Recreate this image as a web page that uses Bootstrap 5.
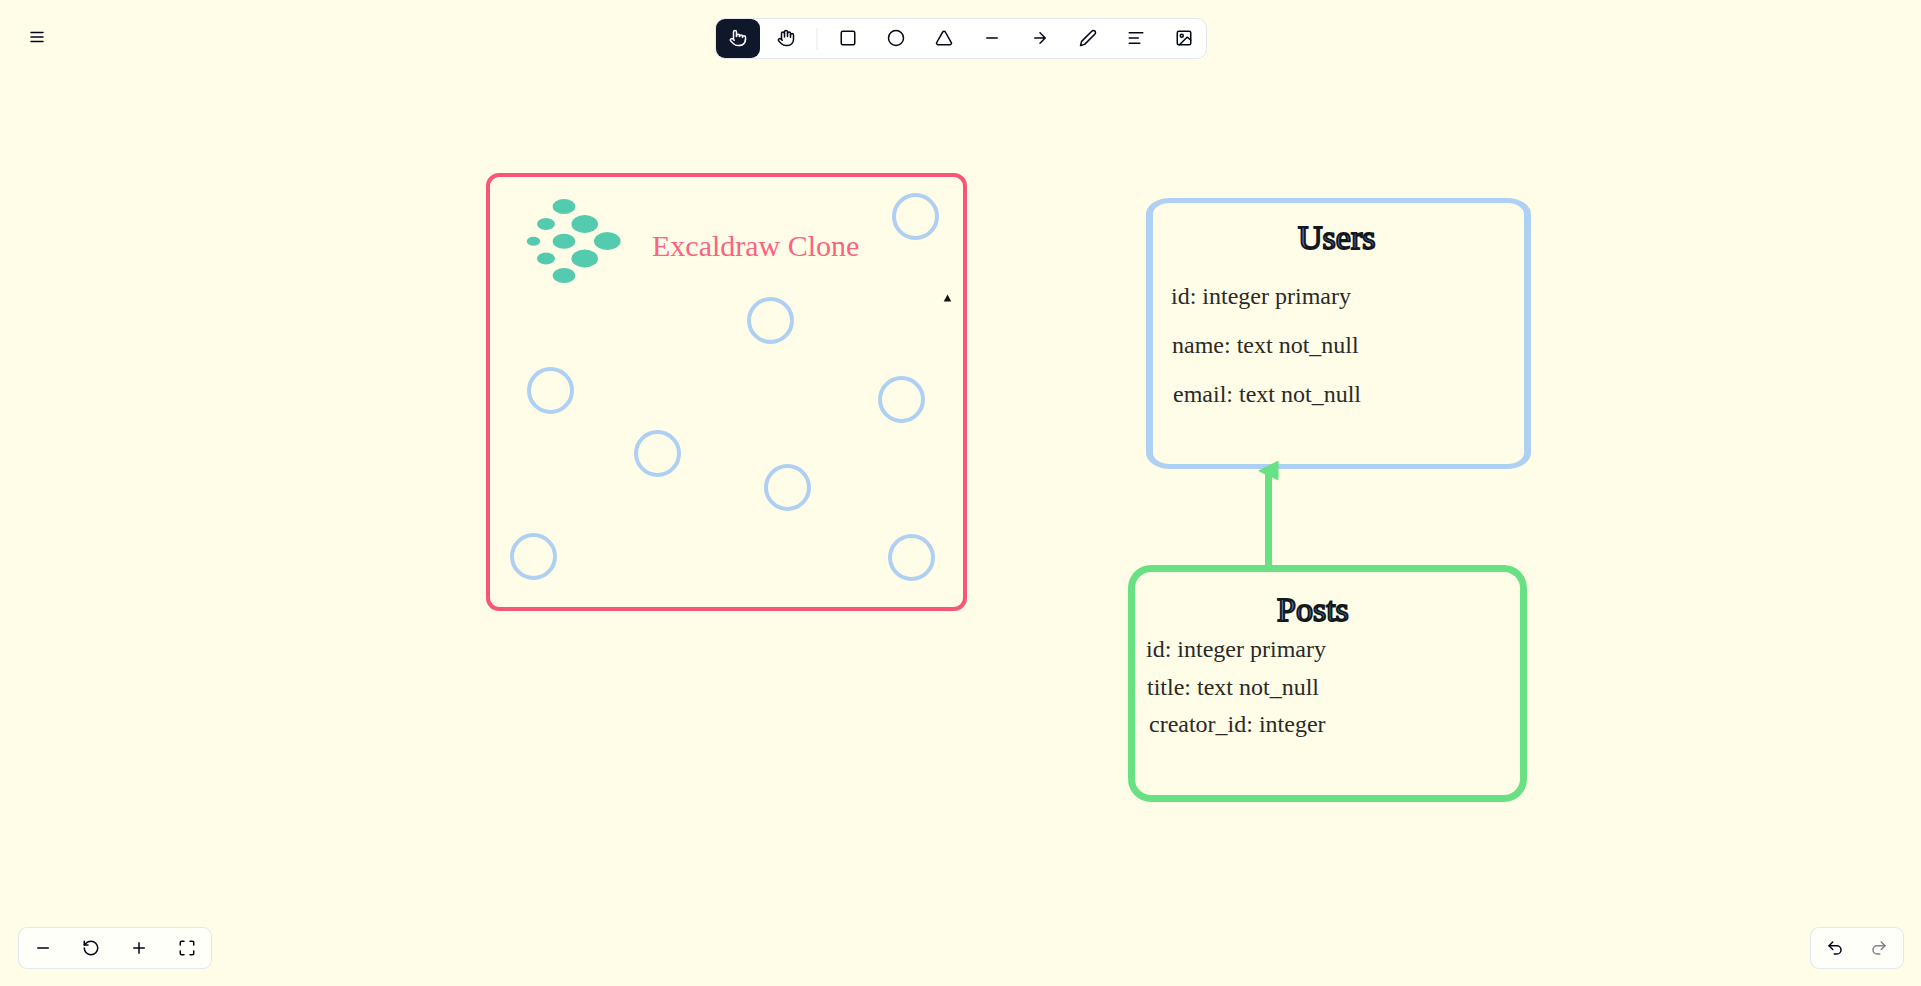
<!DOCTYPE html>
<html lang="en">
<head>
<meta charset="utf-8">
<meta name="viewport" content="width=device-width, initial-scale=1">
<title>Excaldraw Clone</title>
<link href="https://cdn.jsdelivr.net/npm/bootstrap@5.3.0/dist/css/bootstrap.min.css" rel="stylesheet">
<style>
  :root { --ink: #0f172a; --line: #e2e8f0; --paper: #fffde7; --sky: #aed0f2; --rose: #f75676; --leaf: #67e184; }
  body { background: var(--paper); font-family: Inter, sans-serif; }
  .icon { width: 18px; height: 18px; display: block; fill: none; stroke: currentColor; stroke-width: 2; stroke-linecap: round; stroke-linejoin: round; }
  .tool { --bs-btn-color: #020617; --bs-btn-hover-bg: #f1f5f9; --bs-btn-active-bg: var(--ink); --bs-btn-active-color: #f8fafc; --bs-btn-disabled-color: #020617; --bs-btn-disabled-opacity: .5;
    width: 44px; height: 39px; border-radius: 9px; border: 0; padding: 0 0 1px; }
  .tool-wide { width: 48px; }
  .tool-menu { width: 42px; height: 38px; }
  .tool-bar { background: #fff; border: 1px solid var(--line); border-radius: 10px; }
  .tool-panel { background: rgba(255, 255, 255, .8); border: 1px solid var(--line); border-radius: 9px; }
  .tool-panel .tool { height: 40px; padding: 0; }
  .tool-history { padding: 0 2px; }
  .tool-rule { width: 2px; height: 22px; background: #f1f5f9; }
  .edge { padding: 18px; }
  .edge-bottom { padding: 0 17px 17px 18px; }

  /* Canvas objects: each one sits at its own --x / --y */
  .node { position: absolute; left: calc(var(--x) * 1px); top: calc(var(--y) * 1px); }
  .frame-rose { width: 481px; height: 438px; border: 4px solid var(--rose); border-radius: 13px; }
  .frame-sky { width: 385px; height: 271px; border: solid var(--sky); border-width: 5px 7px; border-radius: 24px / 16px; }
  .frame-leaf { width: 399px; height: 237px; border: 7px solid var(--leaf); border-radius: 23px; }
  .ring { width: 47px; height: 47px; border: 4px solid var(--sky); border-radius: 50%; }
  .label { font-family: "Liberation Serif", serif; font-size: 24px; line-height: 1; color: #2a2a27; white-space: nowrap; margin: 0; font-weight: 400; }
  .label-title { font-size: 30px; color: #fa6480; }
  .label-head { font-size: 34px; color: #4684d2; -webkit-text-stroke: 2px #14181c; }
</style>
</head>
<body class="position-relative vh-100 overflow-hidden d-flex flex-column justify-content-between">

<main class="position-absolute top-0 start-0 w-100 h-100 overflow-hidden" aria-label="Canvas">
  <div class="node frame-rose" style="--x:486;--y:173"></div>
  <svg class="node" style="--x:526;--y:198" width="96" height="86" fill="#54cbae" aria-hidden="true">
    <ellipse cx="38" cy="8.500" rx="11.300" ry="7.500"/>
    <ellipse cx="58.700" cy="26" rx="13.300" ry="9"/>
    <ellipse cx="20" cy="26" rx="9" ry="6"/>
    <ellipse cx="7.500" cy="43.300" rx="6.700" ry="4.500"/>
    <ellipse cx="38" cy="43.300" rx="11.300" ry="7.500"/>
    <ellipse cx="81.300" cy="43" rx="13.300" ry="9"/>
    <ellipse cx="20" cy="60.500" rx="9" ry="6"/>
    <ellipse cx="58.700" cy="60.500" rx="13.300" ry="9"/>
    <ellipse cx="38" cy="77.500" rx="11.300" ry="7.500"/>
  </svg>
  <h1 class="node label label-title" style="--x:652;--y:231">Excaldraw Clone</h1>
  <svg class="node" style="--x:943;--y:294" width="9" height="8" aria-hidden="true"><path d="M4.500 .5 8.300 7.500H.7Z" fill="#14140f"/></svg>
  <div class="node ring" style="--x:892;--y:193"></div>
  <div class="node ring" style="--x:747;--y:297"></div>
  <div class="node ring" style="--x:527;--y:367"></div>
  <div class="node ring" style="--x:878;--y:376"></div>
  <div class="node ring" style="--x:634;--y:430"></div>
  <div class="node ring" style="--x:764;--y:464"></div>
  <div class="node ring" style="--x:510;--y:533"></div>
  <div class="node ring" style="--x:888;--y:534"></div>

  <div class="node frame-sky" style="--x:1146;--y:198"></div>
  <h2 class="node label label-head" style="--x:1298;--y:221">Users</h2>
  <p class="node label" style="--x:1171;--y:284">id: integer primary</p>
  <p class="node label" style="--x:1172;--y:333">name: text not_null</p>
  <p class="node label" style="--x:1173;--y:382">email: text not_null</p>

  <div class="node frame-leaf" style="--x:1128;--y:565"></div>
  <svg class="node" style="--x:1258;--y:460" width="22" height="110" fill="#67e184" aria-hidden="true">
    <path d="M0 10.800 20.500 .5V20.500L14 17.500V110H7V14.500Z"/>
  </svg>
  <h2 class="node label label-head" style="--x:1277;--y:593">Posts</h2>
  <p class="node label" style="--x:1146;--y:637">id: integer primary</p>
  <p class="node label" style="--x:1147;--y:675">title: text not_null</p>
  <p class="node label" style="--x:1149;--y:712">creator_id: integer</p>
</main>

<header class="position-relative d-flex justify-content-center edge">
  <button type="button" class="btn tool tool-menu position-absolute start-0 d-flex align-items-center justify-content-center ms-3" aria-label="Menu">
    <svg class="icon" viewBox="0 0 24 24"><path d="M4 12h16M4 6h16M4 18h16"/></svg>
  </button>
  <div class="tool-bar d-flex align-items-center gap-1" role="toolbar" aria-label="Drawing tools">
    <button type="button" class="btn tool active d-flex align-items-center justify-content-center" aria-label="Select" aria-pressed="true">
      <svg class="icon" viewBox="0 0 24 24"><path d="M22 14a8 8 0 0 1-8 8"/><path d="M18 11v-1a2 2 0 0 0-2-2a2 2 0 0 0-2 2"/><path d="M14 10V9a2 2 0 0 0-2-2a2 2 0 0 0-2 2v1"/><path d="M10 9.500V4a2 2 0 0 0-2-2a2 2 0 0 0-2 2v10"/><path d="M18 11a2 2 0 1 1 4 0v3a8 8 0 0 1-8 8h-2c-2.800 0-4.500-.86-5.990-2.340l-3.600-3.600a2 2 0 0 1 2.830-2.820L7 15"/></svg>
    </button>
    <button type="button" class="btn tool d-flex align-items-center justify-content-center" aria-label="Pan">
      <svg class="icon" viewBox="0 0 24 24"><path d="M18 11V6a2 2 0 0 0-2-2a2 2 0 0 0-2 2"/><path d="M14 10V4a2 2 0 0 0-2-2a2 2 0 0 0-2 2v2"/><path d="M10 10.500V6a2 2 0 0 0-2-2a2 2 0 0 0-2 2v8"/><path d="M18 8a2 2 0 1 1 4 0v6a8 8 0 0 1-8 8h-2c-2.800 0-4.500-.86-5.990-2.340l-3.600-3.600a2 2 0 0 1 2.830-2.820L7 15"/></svg>
    </button>
    <div class="tool-rule mx-1"></div>
    <button type="button" class="btn tool d-flex align-items-center justify-content-center" aria-label="Rectangle">
      <svg class="icon" viewBox="0 0 24 24"><rect x="3" y="3" width="18" height="18" rx="2"/></svg>
    </button>
    <button type="button" class="btn tool d-flex align-items-center justify-content-center" aria-label="Circle">
      <svg class="icon" viewBox="0 0 24 24"><circle cx="12" cy="12" r="10"/></svg>
    </button>
    <button type="button" class="btn tool d-flex align-items-center justify-content-center" aria-label="Triangle">
      <svg class="icon" viewBox="0 0 24 24"><path d="M13.730 4a2 2 0 0 0-3.460 0l-8 14A2 2 0 0 0 4 21h16a2 2 0 0 0 1.730-3Z"/></svg>
    </button>
    <button type="button" class="btn tool d-flex align-items-center justify-content-center" aria-label="Line">
      <svg class="icon" viewBox="0 0 24 24"><path d="M5 12h14"/></svg>
    </button>
    <button type="button" class="btn tool d-flex align-items-center justify-content-center" aria-label="Arrow">
      <svg class="icon" viewBox="0 0 24 24"><path d="M5 12h14M12 5l7 7-7 7"/></svg>
    </button>
    <button type="button" class="btn tool d-flex align-items-center justify-content-center" aria-label="Pencil">
      <svg class="icon" viewBox="0 0 24 24"><path d="M17 3a2.850 2.830 0 1 1 4 4L7.500 20.500 2 22l1.500-5.500Z"/></svg>
    </button>
    <button type="button" class="btn tool d-flex align-items-center justify-content-center" aria-label="Text">
      <svg class="icon" viewBox="0 0 24 24"><path d="M21 5H3M15 12H3M17 19H3"/></svg>
    </button>
    <button type="button" class="btn tool d-flex align-items-center justify-content-center" aria-label="Image">
      <svg class="icon" viewBox="0 0 24 24"><rect x="3" y="3" width="18" height="18" rx="2"/><circle cx="9" cy="9" r="2"/><path d="m21 15-3.090-3.090a2 2 0 0 0-2.820 0L6 21"/></svg>
    </button>
  </div>
</header>

<footer class="position-relative d-flex justify-content-between edge-bottom">
  <div class="tool-panel d-flex" role="toolbar" aria-label="Zoom">
    <button type="button" class="btn tool tool-wide d-flex align-items-center justify-content-center" aria-label="Zoom out">
      <svg class="icon" viewBox="0 0 24 24"><path d="M5 12h14"/></svg>
    </button>
    <button type="button" class="btn tool tool-wide d-flex align-items-center justify-content-center" aria-label="Reset zoom">
      <svg class="icon" viewBox="0 0 24 24"><path d="M3 12a9 9 0 1 0 9-9 9.750 9.750 0 0 0-6.740 2.740L3 8"/><path d="M3 3v5h5"/></svg>
    </button>
    <button type="button" class="btn tool tool-wide d-flex align-items-center justify-content-center" aria-label="Zoom in">
      <svg class="icon" viewBox="0 0 24 24"><path d="M5 12h14M12 5v14"/></svg>
    </button>
    <button type="button" class="btn tool tool-wide d-flex align-items-center justify-content-center" aria-label="Full screen">
      <svg class="icon" viewBox="0 0 24 24"><path d="M8 3H5a2 2 0 0 0-2 2v3M21 8V5a2 2 0 0 0-2-2h-3M3 16v3a2 2 0 0 0 2 2h3M16 21h3a2 2 0 0 0 2-2v-3"/></svg>
    </button>
  </div>
  <div class="tool-panel tool-history d-flex" role="toolbar" aria-label="History">
    <button type="button" class="btn tool d-flex align-items-center justify-content-center" aria-label="Undo">
      <svg class="icon" viewBox="0 0 24 24"><path d="M9 14 4 9l5-5"/><path d="M4 9h10.500a5.500 5.500 0 0 1 0 11H11"/></svg>
    </button>
    <button type="button" class="btn tool d-flex align-items-center justify-content-center" aria-label="Redo" disabled>
      <svg class="icon" viewBox="0 0 24 24"><path d="m15 14 5-5-5-5"/><path d="M20 9H9.500a5.500 5.500 0 0 0 0 11H13"/></svg>
    </button>
  </div>
</footer>

<script src="https://cdn.jsdelivr.net/npm/bootstrap@5.3.0/dist/js/bootstrap.bundle.min.js"></script>
</body>
</html>
